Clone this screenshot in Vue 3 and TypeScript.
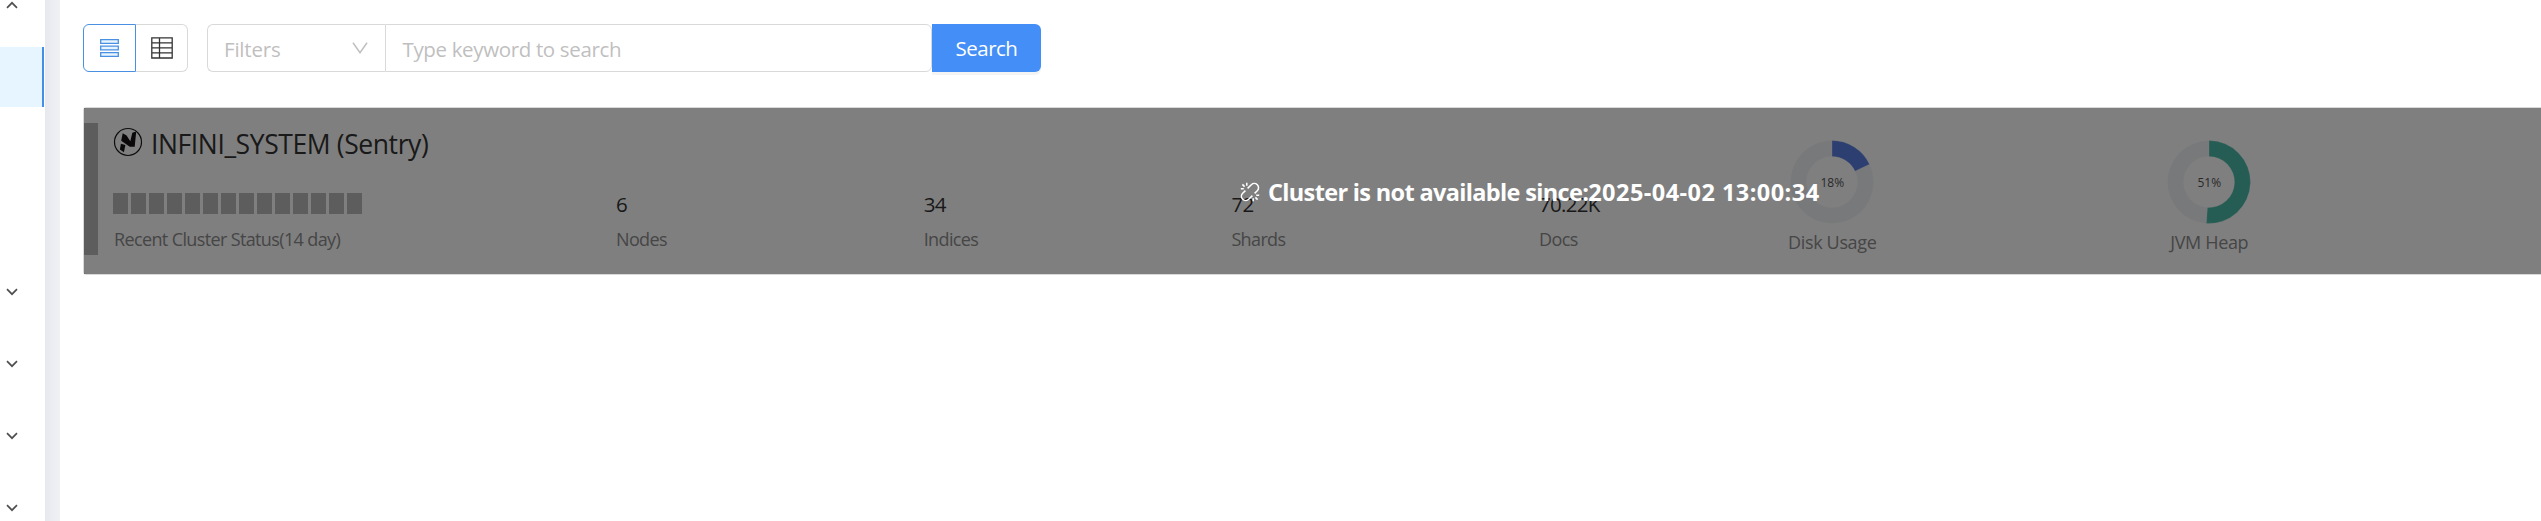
<script setup lang="ts">
interface Stat { label: string; value: string }
interface Gauge { label: string; kind: string; percent: number }

const stats: Stat[] = [
  { label: 'Nodes', value: '6' },
  { label: 'Indices', value: '34' },
  { label: 'Shards', value: '72' },
  { label: 'Docs', value: '70.22K' },
]
const gauges: Gauge[] = [
  { label: 'Disk Usage', kind: 'disk', percent: 18 },
  { label: 'JVM Heap', kind: 'heap', percent: 51 },
]

function slice(from: number, to: number): string {
  const point = (r: number, t: number) => {
    const a = (t / 100) * Math.PI * 2
    return `${(42 + r * Math.sin(a)).toFixed(2)} ${(42 - r * Math.cos(a)).toFixed(2)}`
  }
  const large = to - from > 50 ? 1 : 0
  return `M${point(41.5, from)}A41.5 41.5 0 ${large} 1 ${point(41.5, to)}L${point(25.5, to)}A25.5 25.5 0 ${large} 0 ${point(25.5, from)}Z`
}
</script>

<template>
  <div class="page">
    <aside class="sider">
      <div class="slot first"><svg class="chev" viewBox="0 0 12 8"><path d="M1 6.8 6 1.8 11 6.8" /></svg></div>
      <div class="selected"></div>
      <div class="menu">
        <div v-for="n in 4" :key="n" class="slot"><svg class="chev" viewBox="0 0 12 8"><path d="M1 1.2 6 6.2 11 1.2" /></svg></div>
      </div>
    </aside>
    <div class="gutter"></div>
    <main class="content">
      <div class="toolbar">
        <div class="toggle">
          <button class="mode active">
            <svg width="19" height="20" viewBox="0 0 19 20"><path d="M.7 1.7h17.6v3.6H.7zM.7 8.2h17.6v3.6H.7zM.7 14.7h17.6v3.6H.7z" /></svg>
          </button>
          <button class="mode">
            <svg width="22" height="22" viewBox="0 0 22 22"><path d="M.8.8h20.4v20.2H.8zM.8 5.8h20.4M.8 10.8h20.4M.8 15.8h20.4M8.5.8v20.2" /></svg>
          </button>
        </div>
        <div class="filters">
          <span class="t-filters">Filters</span>
          <svg width="16" height="12" viewBox="0 0 16 12"><path d="M1 .8 8 10.6 15 .8" /></svg>
        </div>
        <div class="keyword"><span class="t-keyword">Type keyword to search</span></div>
        <button class="search"><span class="t-search">Search</span></button>
      </div>

      <section class="card">
        <div class="health"></div>
        <div class="summary">
          <div class="title">
            <svg width="30" height="30" viewBox="0 0 30 30">
              <circle cx="15" cy="15" r="13.500" />
              <path d="M9.700 6.300 13.600 8.600 17.300 14.300 19.300 5.700 23.200 4.600 21.700 19.800 16.800 19.800 8.200 13.800ZM7.900 16.800 12.400 17.900 10.900 25.300 6.900 22.500Z" />
            </svg>
            <span class="t-title">INFINI_SYSTEM (Sentry)</span>
          </div>
          <div class="days"><i v-for="d in 14" :key="d"></i></div>
          <div class="label">Recent Cluster Status(14 day)</div>
        </div>
        <div v-for="s in stats" :key="s.label" class="stat">
          <div class="value">{{ s.value }}</div>
          <div class="label">{{ s.label }}</div>
        </div>
        <div v-for="g in gauges" :key="g.label" class="gauge" :class="g.kind">
          <div class="ring">
            <svg width="84" height="84" viewBox="0 0 84 84">
              <path class="free" :d="slice(g.percent, 100)" />
              <path class="used" :d="slice(0, g.percent)" />
            </svg>
            <span class="percent">{{ g.percent }}%</span>
          </div>
          <div class="label">{{ g.label }}</div>
        </div>
        <div class="mask">
          <svg width="20" height="20" viewBox="0 0 20 20"><path d="M7.600 6.400 11.300 2.700a4.200 4.200 0 0 1 6 6L14.600 11.400M12.400 13.600 8.700 17.300a4.200 4.200 0 0 1-6-6L5.400 8.600M6.800 .8v3M2.400 2.400 4.600 4.600M.8 6.800h3M13.200 19.200v-3M17.600 17.600 15.400 15.400M19.200 13.200h-3" /></svg>
          <div class="t-mask">Cluster is not available since:<span class="since">2025-04-02 13:00:34</span></div>
        </div>
      </section>
    </main>
  </div>
</template>

<style>
body { overflow: hidden; background: #fff; }
</style>

<style scoped>
* { box-sizing: border-box; }
.page { display: flex; width: 100%; height: 521px; overflow: hidden; font-family: "Open Sans", "Noto Sans", sans-serif; font-size: 20.500px; color: #222; white-space: nowrap; }
svg { display: block; fill: none; flex: none; }
.sider { width: 45px; flex: none; }
.slot { height: 72px; padding: 32px 0 0 5.500px; }
.slot.first { height: 47px; padding-top: 1px; }
.chev { width: 12px; height: 8px; stroke: #505050; stroke-width: 1.700; }
.selected { width: 44px; height: 60px; background: #e6f5ff; border-right: 2px solid #468fe8; }
.menu { padding-top: 149px; }
.gutter { width: 15px; flex: none; background: linear-gradient(90deg, #e7e8ed, #eef0f4 80%); }
.content { flex: 1; min-width: 0; padding: 24px 0 0 23px; }
.toolbar { display: flex; height: 48px; }
button { padding: 0; margin: 0; font: inherit; }
.toggle { display: flex; margin-right: 19px; }
.mode { width: 52px; height: 48px; display: flex; align-items: center; justify-content: center; background: #fff; border: 1px solid #d9d9d9; border-radius: 0 6px 6px 0; border-left: 0; stroke: #333; stroke-width: 1.300; }
.mode.active { width: 53px; border: 1px solid #4a90e2; border-radius: 6px 0 0 6px; stroke: #4a90e2; }
.mode.active path { fill: #e6f5ff; }
.filters { width: 178px; border: 1px solid #d9d9d9; border-right: 0; border-radius: 6px 0 0 6px; display: flex; align-items: center; justify-content: space-between; padding: 0 17px 0 16px; color: #bfbfbf; }
.filters svg { stroke: #bfbfbf; stroke-width: 1.500; }
.t-filters { letter-spacing: -.2px; padding-top: 1px; }
.t-keyword { letter-spacing: -.35px; padding-top: 1px; }
.keyword { width: 547px; border: 1px solid #d9d9d9; border-radius: 0 6px 6px 0; padding: 0 17px 0 16.500px; color: #bfbfbf; display: flex; align-items: center; }
.search { width: 109px; border: 0; border-radius: 0 6px 6px 0; background: #448ef7; color: #fff; box-shadow: 0 3px 0 rgba(0,0,0,.045); letter-spacing: -.5px; }
.card { position: relative; margin-top: 35px; height: 168px; width: 2500px; border: 1px solid #d9d9d9; border-radius: 3px; display: flex; }
.health { width: 14px; height: 132px; margin: 15px 15px 0 0; background: #bbb; flex: none; }
.summary { width: 503px; flex: none; }
.title { display: flex; align-items: center; height: 30px; margin-top: 19px; gap: 8px; color: #333; }
.t-title { font-size: 26.500px; line-height: 30px; letter-spacing: -.4px; padding-top: 3px; }
.title svg circle { stroke: #1a1a1a; stroke-width: 1.200; }
.title svg path { fill: #151110; }
.days { display: flex; gap: 3px; margin-top: 36px; }
.days i { width: 15px; height: 21px; background: #bbb; }
.label { font-size: 18px; line-height: 26px; color: #8c8c8c; letter-spacing: -.63px; }
.summary .label { margin: 12px 0 0 1px; }
.stat { width: 307.700px; padding-top: 81px; flex: none; }
.value { line-height: 30px; color: #333; letter-spacing: -.7px; }
.stat .label { margin-top: 7px; }
.gauge { width: 377px; flex: none; display: flex; flex-direction: column; align-items: center; padding-top: 32px; }
.gauge.disk { margin-left: -203px; }
.ring { display: grid; place-items: center; }
.ring > * { grid-area: 1 / 1; }
.ring path { stroke: #fff; stroke-opacity: .3; stroke-width: 1; }
.disk .used { fill: #5b7fe0; }
.heap .used { fill: #4ab8a8; }
.free { fill: #f0f2f5; }
.percent { font-size: 12px; color: #555; padding-top: 1px; }
.gauge .label { margin-top: 5px; letter-spacing: -.35px; }
.mask { position: absolute; inset: 0; background: rgba(0,0,0,.5); display: flex; color: #fff; font-weight: 700; font-size: 23.500px; padding: 71px 0 0 1156px; gap: 8px; }
.mask svg { stroke: #fff; stroke-width: 1.500; margin-top: 3px; }
.t-mask { line-height: 26px; letter-spacing: -.66px; }
.since { letter-spacing: .45px; }
</style>
